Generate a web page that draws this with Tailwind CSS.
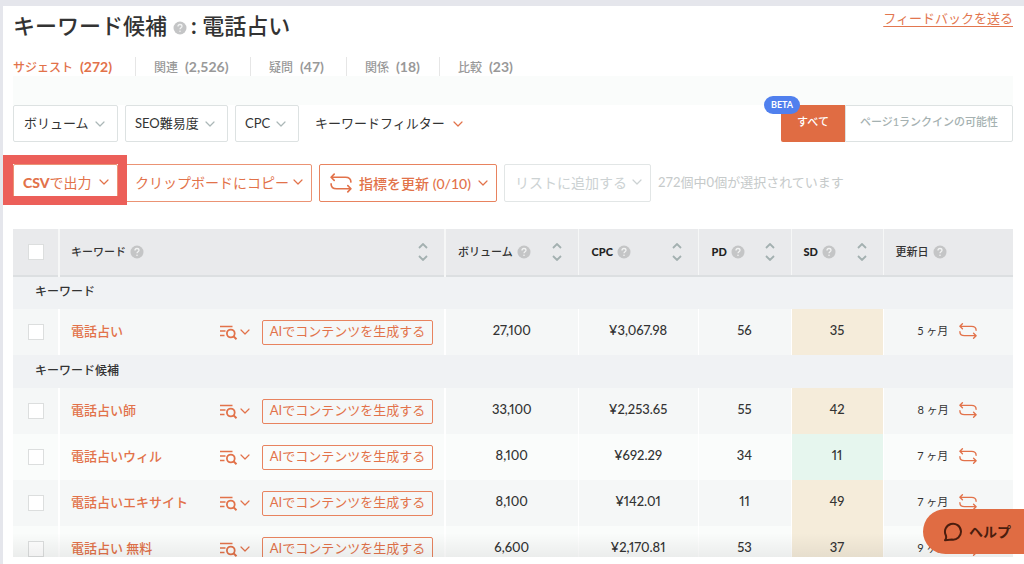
<!DOCTYPE html>
<html lang="ja">
<head>
<meta charset="utf-8">
<meta name="viewport" content="width=device-width, initial-scale=1">
<title>キーワード候補</title>
<script src="https://cdn.jsdelivr.net/npm/@tailwindcss/browser@4"></script>
</head>
<body class="bg-[#e5e6ec] font-['Lato','Noto_Sans_CJK_JP',sans-serif] text-[#333]">
<svg class="hidden" aria-hidden="true">
  <symbol id="chev" viewBox="0 0 10 6"><path d="M1 1l4 4 4-4" fill="none" stroke="currentColor" stroke-width="1.2" stroke-linecap="round" stroke-linejoin="round"/></symbol>
  <symbol id="sort" viewBox="0 0 10 18"><path d="M1 5l4-4 4 4M1 13l4 4 4-4" fill="none" stroke="#a3b0b0" stroke-width="1.8"/></symbol>
  <symbol id="help" viewBox="0 0 14 14"><circle cx="7" cy="7" r="6.5" fill="#c4c5c6"/><path d="M5 5.4c0-2.6 4-2.5 4-.1 0 1.5-2 1.5-2 3" fill="none" stroke="#f2f3f3" stroke-width="1.3"/><circle cx="7" cy="10.3" r=".8" fill="#f2f3f3"/></symbol>
  <symbol id="swap" viewBox="0 0 20 18"><path d="M3.800 1L1 3.800l2.800 2.800M1.200 3.800H14c3.500 0 5 1.500 5 4.400M16.200 11.400l2.800 2.800-2.800 2.800M18.800 14.200H6c-3.500 0-5-1.500-5-4.400" fill="none" stroke="currentColor" stroke-width="1.5" stroke-linecap="round" stroke-linejoin="round"/></symbol>
  <symbol id="listsearch" viewBox="0 0 18 15"><path d="M0 1.500h12.500M0 6h5.500M0 10.500h4.500" fill="none" stroke="currentColor" stroke-width="1.600"/><circle cx="10.800" cy="8.500" r="3.900" fill="none" stroke="currentColor" stroke-width="1.800"/><path d="M13.500 11.200l3 3" stroke="currentColor" stroke-width="2"/></symbol>
</svg>

<div class="flex h-screen flex-col pt-1.5 pl-[3px]">
<main class="flex min-h-0 flex-1 flex-col bg-white pr-[11px] pb-[7px] pl-[10px]">
  <header class="flex h-[51px] shrink-0 items-start justify-between">
    <h1 class="flex items-center pt-1 text-[22px] leading-8 font-medium">キーワード候補<svg class="mt-1 mr-1 ml-1.5 size-3.5"><use href="#help"/></svg><span><b>:</b> 電話占い</span></h1>
    <a href="#" class="pt-0.5 text-[13px] leading-5 text-[#e2764f] underline underline-offset-3">フィードバックを送る</a>
  </header>

  <nav class="flex h-[19px] shrink-0 text-[12px] leading-[19px] font-medium text-[#999]">
    <a href="#" class="w-[123px] border-r border-[#e6e6e6] text-[#e2724a]">サジェスト <b class="ml-1 text-[14px]">(272)</b></a>
    <a href="#" class="w-[115px] border-r border-[#e6e6e6] pl-[18px]">関連 <b class="ml-1 text-[14px]">(2,526)</b></a>
    <a href="#" class="w-[96px] border-r border-[#e6e6e6] pl-[18px]">疑問 <b class="ml-1 text-[14px]">(47)</b></a>
    <a href="#" class="w-[93px] border-r border-[#e6e6e6] pl-[18px]">関係 <b class="ml-1 text-[14px]">(18)</b></a>
    <a href="#" class="pl-[18px]">比較 <b class="ml-1 text-[14px]">(23)</b></a>
  </nav>
  <div class="h-[29px] shrink-0 bg-[#fafcfb]"></div>

  <div class="flex h-[37px] shrink-0 items-stretch justify-between text-[13px]">
    <div class="flex gap-[7px]">
      <button class="flex w-[105px] items-center justify-between rounded-xs border border-[#dde2e2] pr-3 pl-[10px]">ボリューム<svg class="h-1.5 w-2.5 text-[#abb7b7]"><use href="#chev"/></svg></button>
      <button class="flex w-[103px] items-center justify-between rounded-xs border border-[#dde2e2] pr-3 pl-[9px]">SEO難易度<svg class="h-1.5 w-2.5 text-[#abb7b7]"><use href="#chev"/></svg></button>
      <button class="flex w-[64px] items-center justify-between rounded-xs border border-[#dde2e2] pr-3 pl-[9px]">CPC<svg class="h-1.5 w-2.5 text-[#abb7b7]"><use href="#chev"/></svg></button>
      <button class="ml-[9px] flex items-center gap-2">キーワードフィルター<svg class="h-1.5 w-2.5 text-[#e2724a]"><use href="#chev"/></svg></button>
    </div>
    <div class="relative flex text-[11px]">
      <button class="w-16 rounded-l-xs bg-[#e06c43] pb-0.5 font-medium text-white">すべて</button>
      <button class="w-[168px] rounded-r-xs border border-[#dde2e2] pb-0.5 font-medium text-[#a5b1b1]">ページ1ランクインの可能性</button>
      <span class="absolute -top-[9px] -left-[17px] rounded-full bg-[#5080ee] px-[7px] text-[9px] leading-[18px] font-bold text-white">BETA</span>
    </div>
  </div>

  <div class="relative mt-[22px] flex h-[38px] shrink-0 items-stretch gap-[7px] text-[14px] text-[#e2724a]">
    <button class="flex w-[105px] items-center justify-between rounded-xs border border-[#eb9374] pr-2 pb-0.5 pl-[9px]"><span><b class="font-black">CSV</b>で出力</span><svg class="h-1.5 w-2.5"><use href="#chev"/></svg></button>
    <button class="flex w-[187px] items-center justify-between rounded-xs border border-[#eb9374] pr-2 pb-0.5 pl-[9px]">クリップボードにコピー<svg class="h-1.5 w-2.5"><use href="#chev"/></svg></button>
    <button class="flex w-[178px] items-center justify-between rounded-xs border border-[#e8835f] pr-2 pl-[10px] font-medium"><svg class="h-5 w-[22px]"><use href="#swap"/></svg><span>指標を更新 (0/10)</span><svg class="h-1.5 w-2.5"><use href="#chev"/></svg></button>
    <button class="flex w-[147px] items-center justify-between rounded-xs border border-[#e2e6e6] pr-2 pb-0.5 pl-[10px] text-[#ccd2d3]">リストに追加する<svg class="h-1.5 w-2.5"><use href="#chev"/></svg></button>
    <p class="self-center text-[13px] text-[#c6caca]">272個中0個が選択されています</p>
    <div class="pointer-events-none absolute -top-[9px] -left-[10px] h-[50px] w-[124px] border-[9px] border-l-[10px] border-[#ec5f59]"></div>
  </div>

  <div class="relative mt-[27px] min-h-0 flex-1 overflow-hidden">
  <table class="w-full table-fixed border-collapse text-[13px]">
    <colgroup><col class="w-[46px]"><col><col class="w-[133px]"><col class="w-[120px]"><col class="w-[93px]"><col class="w-[92px]"><col class="w-[130px]"></colgroup>
    <thead>
      <tr class="h-[47px] border-b-2 border-[#dcdfe1] bg-[#e9eaec] text-left text-[11px]">
        <th class="border-r-2 border-r-[#f6f7f7] pl-[15px]"><input type="checkbox" aria-label="すべて選択" class="block size-4 appearance-none border border-[#dcdede] bg-white"></th>
        <th class="border-r-2 border-r-[#f6f7f7] pr-[16px] pl-[11px] font-medium"><div class="flex items-center">キーワード<svg class="ml-1 size-3.5"><use href="#help"/></svg><svg class="ml-auto h-[18px] w-2.5"><use href="#sort"/></svg></div></th>
        <th class="border-r border-r-[#f6f7f7] pr-[16px] pl-[12px] font-medium"><div class="flex items-center">ボリューム<svg class="ml-1 size-3.5"><use href="#help"/></svg><svg class="ml-auto h-[18px] w-2.5"><use href="#sort"/></svg></div></th>
        <th class="border-r border-r-[#f6f7f7] pr-[16px] pl-[13px] font-black text-[#222]"><div class="flex items-center">CPC<svg class="ml-1 size-3.5"><use href="#help"/></svg><svg class="ml-auto h-[18px] w-2.5"><use href="#sort"/></svg></div></th>
        <th class="border-r border-r-[#f6f7f7] pr-[16px] pl-[13px] font-black text-[#222]"><div class="flex items-center">PD<svg class="ml-1 size-3.5"><use href="#help"/></svg><svg class="ml-auto h-[18px] w-2.5"><use href="#sort"/></svg></div></th>
        <th class="border-r border-r-[#f6f7f7] pr-[16px] pl-[12px] font-black text-[#222]"><div class="flex items-center">SD<svg class="ml-1 size-3.5"><use href="#help"/></svg><svg class="ml-auto h-[18px] w-2.5"><use href="#sort"/></svg></div></th>
        <th class="pl-[12px] font-medium"><div class="flex items-center">更新日<svg class="ml-1 size-3.5"><use href="#help"/></svg></div></th>
      </tr>
    </thead>
    <tbody class="text-center proportional-nums">
      <tr class="h-[33px] bg-[#f0f2f4]"><th colspan="7" class="pb-0.5 pl-[22px] text-left text-[12px] font-medium">キーワード</th></tr>
      <tr class="h-[46px] bg-[#f5f7f7]">
        <td class="border-r-2 border-white pl-[15px]"><input type="checkbox" aria-label="電話占い" class="block size-4 appearance-none border border-[#dcdede] bg-white"></td>
        <td class="border-r-2 border-white pr-[11px] pl-[11px]"><div class="flex items-center text-[#e2724a]"><a href="#" class="font-medium">電話占い</a><button aria-label="検索メニュー" class="mr-3 ml-auto flex items-center gap-0.5"><svg class="h-[15px] w-[18px]"><use href="#listsearch"/></svg><svg class="h-1.5 w-2.5"><use href="#chev"/></svg></button><button class="h-[25px] w-[171px] rounded-xs border border-[#e8835f] pb-0.5 leading-5">AIでコンテンツを生成する</button></div></td>
        <td class="border-r border-white pb-0.5 font-medium">27,100</td><td class="border-r border-white pb-0.5 font-medium">¥3,067.98</td><td class="border-r border-white pb-0.5 font-medium">56</td><td class="border-r border-white bg-[#f5ecda] pb-0.5 font-medium">35</td>
        <td class="pb-0.5"><div class="flex items-center pl-[34px] text-[11px]"><span class="w-[41px] text-left">5 ヶ月</span><button aria-label="更新" class="text-[#e2724a]"><svg class="h-[18px] w-[18px]"><use href="#swap"/></svg></button></div></td>
      </tr>
      <tr class="h-[33px] bg-[#f0f2f4]"><th colspan="7" class="pb-0.5 pl-[22px] text-left text-[12px] font-medium">キーワード候補</th></tr>
      <tr class="h-[46px] bg-[#f5f7f7]">
        <td class="border-r-2 border-white pl-[15px]"><input type="checkbox" aria-label="電話占い師" class="block size-4 appearance-none border border-[#dcdede] bg-white"></td>
        <td class="border-r-2 border-white pr-[11px] pl-[11px]"><div class="flex items-center text-[#e2724a]"><a href="#" class="font-medium">電話占い師</a><button aria-label="検索メニュー" class="mr-3 ml-auto flex items-center gap-0.5"><svg class="h-[15px] w-[18px]"><use href="#listsearch"/></svg><svg class="h-1.5 w-2.5"><use href="#chev"/></svg></button><button class="h-[25px] w-[171px] rounded-xs border border-[#e8835f] pb-0.5 leading-5">AIでコンテンツを生成する</button></div></td>
        <td class="border-r border-white pb-0.5 font-medium">33,100</td><td class="border-r border-white pb-0.5 font-medium">¥2,253.65</td><td class="border-r border-white pb-0.5 font-medium">55</td><td class="border-r border-white bg-[#f5ecda] pb-0.5 font-medium">42</td>
        <td class="pb-0.5"><div class="flex items-center pl-[34px] text-[11px]"><span class="w-[41px] text-left">8 ヶ月</span><button aria-label="更新" class="text-[#e2724a]"><svg class="h-[18px] w-[18px]"><use href="#swap"/></svg></button></div></td>
      </tr>
      <tr class="h-[46px] bg-[#fafcfb]">
        <td class="border-r-2 border-white pl-[15px]"><input type="checkbox" aria-label="電話占いウィル" class="block size-4 appearance-none border border-[#dcdede] bg-white"></td>
        <td class="border-r-2 border-white pr-[11px] pl-[11px]"><div class="flex items-center text-[#e2724a]"><a href="#" class="font-medium">電話占いウィル</a><button aria-label="検索メニュー" class="mr-3 ml-auto flex items-center gap-0.5"><svg class="h-[15px] w-[18px]"><use href="#listsearch"/></svg><svg class="h-1.5 w-2.5"><use href="#chev"/></svg></button><button class="h-[25px] w-[171px] rounded-xs border border-[#e8835f] pb-0.5 leading-5">AIでコンテンツを生成する</button></div></td>
        <td class="border-r border-white pb-0.5 font-medium">8,100</td><td class="border-r border-white pb-0.5 font-medium">¥692.29</td><td class="border-r border-white pb-0.5 font-medium">34</td><td class="border-r border-white bg-[#e6f6ee] pb-0.5 font-medium">11</td>
        <td class="pb-0.5"><div class="flex items-center pl-[34px] text-[11px]"><span class="w-[41px] text-left">7 ヶ月</span><button aria-label="更新" class="text-[#e2724a]"><svg class="h-[18px] w-[18px]"><use href="#swap"/></svg></button></div></td>
      </tr>
      <tr class="h-[46px] bg-[#f5f7f7]">
        <td class="border-r-2 border-white pl-[15px]"><input type="checkbox" aria-label="電話占いエキサイト" class="block size-4 appearance-none border border-[#dcdede] bg-white"></td>
        <td class="border-r-2 border-white pr-[11px] pl-[11px]"><div class="flex items-center text-[#e2724a]"><a href="#" class="font-medium">電話占いエキサイト</a><button aria-label="検索メニュー" class="mr-3 ml-auto flex items-center gap-0.5"><svg class="h-[15px] w-[18px]"><use href="#listsearch"/></svg><svg class="h-1.5 w-2.5"><use href="#chev"/></svg></button><button class="h-[25px] w-[171px] rounded-xs border border-[#e8835f] pb-0.5 leading-5">AIでコンテンツを生成する</button></div></td>
        <td class="border-r border-white pb-0.5 font-medium">8,100</td><td class="border-r border-white pb-0.5 font-medium">¥142.01</td><td class="border-r border-white pb-0.5 font-medium">11</td><td class="border-r border-white bg-[#f5ecda] pb-0.5 font-medium">49</td>
        <td class="pb-0.5"><div class="flex items-center pl-[34px] text-[11px]"><span class="w-[41px] text-left">7 ヶ月</span><button aria-label="更新" class="text-[#e2724a]"><svg class="h-[18px] w-[18px]"><use href="#swap"/></svg></button></div></td>
      </tr>
      <tr class="h-[46px] bg-[#fafcfb]">
        <td class="border-r-2 border-white pl-[15px]"><input type="checkbox" aria-label="電話占い 無料" class="block size-4 appearance-none border border-[#dcdede] bg-white"></td>
        <td class="border-r-2 border-white pr-[11px] pl-[11px]"><div class="flex items-center text-[#e2724a]"><a href="#" class="font-medium">電話占い 無料</a><button aria-label="検索メニュー" class="mr-3 ml-auto flex items-center gap-0.5"><svg class="h-[15px] w-[18px]"><use href="#listsearch"/></svg><svg class="h-1.5 w-2.5"><use href="#chev"/></svg></button><button class="h-[25px] w-[171px] rounded-xs border border-[#e8835f] pb-0.5 leading-5">AIでコンテンツを生成する</button></div></td>
        <td class="border-r border-white pb-0.5 font-medium">6,600</td><td class="border-r border-white pb-0.5 font-medium">¥2,170.81</td><td class="border-r border-white pb-0.5 font-medium">53</td><td class="border-r border-white bg-[#f5ecda] pb-0.5 font-medium">37</td>
        <td class="pb-0.5"><div class="flex items-center pl-[34px] text-[11px]"><span class="w-[41px] text-left">9 ヶ月</span><button aria-label="更新" class="text-[#e2724a]"><svg class="h-[18px] w-[18px]"><use href="#swap"/></svg></button></div></td>
      </tr>
    </tbody>
  </table>
  <div class="pointer-events-none absolute inset-x-0 bottom-0 h-6 bg-linear-to-b from-transparent to-black/6"></div>
  </div>
</main>
</div>

<button class="fixed right-0 bottom-[10px] flex h-[45px] w-[101px] items-center gap-1.5 rounded-l-full rounded-r-[18px] bg-[#e06c43] pl-5 text-[14px] font-bold text-[#4a1d0e]"><svg class="size-5 shrink-0" viewBox="0 0 20 20"><path d="M2 18.200c1.400-1.500 1.500-3 .8-5A8 8 0 1 1 9 17.600z" fill="none" stroke="currentColor" stroke-width="2" stroke-linejoin="round"/></svg>ヘルプ</button>
</body>
</html>
